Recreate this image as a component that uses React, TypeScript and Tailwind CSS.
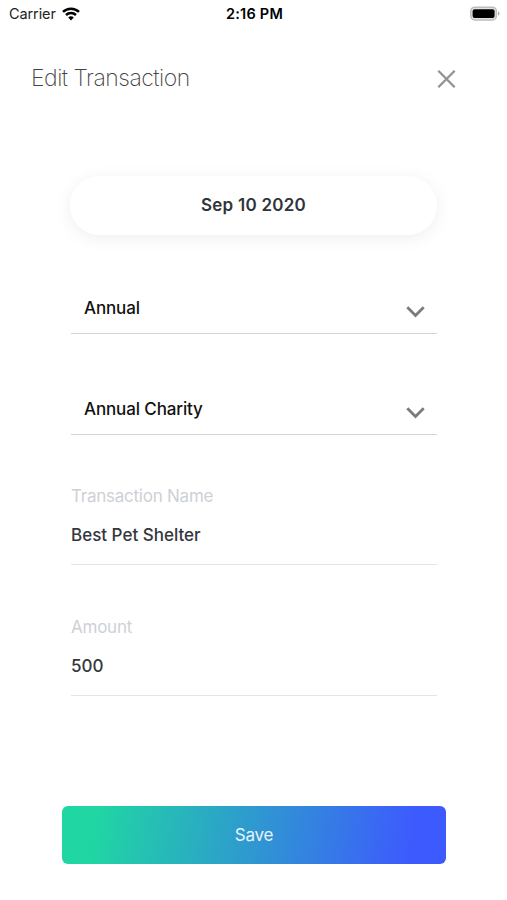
import React from 'react';

type SelectProps = {
  value: string;
};

type FieldProps = {
  label: string;
  value: string;
};

const StatusBar = () => (
  <div className="grid h-7 grid-cols-3 items-center pr-[7px] pl-[9px] text-black">
    <div className="flex items-center gap-[6px]">
      <span className="text-[14.5px] leading-5 tracking-[-0.1px] text-[#222]">Carrier</span>
      <svg width="18" height="14" viewBox="0 0 18 14" fill="none" stroke="#000" strokeWidth="2.5">
        <path d="M1 4.9C5.4.6 12.6.6 17 4.9" />
        <path d="M4 8c2.8-2.6 7.2-2.6 10 0" />
        <path d="M6.2 10.4c1.6-1.4 4-1.4 5.6 0L9 13.4z" fill="#000" stroke="none" />
      </svg>
    </div>
    <span className="text-center text-[14.5px] leading-5 font-semibold tracking-[0.25px] whitespace-nowrap">
      2:16 PM
    </span>
    <svg className="justify-self-end" width="31" height="16" viewBox="0 0 31 16">
      <rect x="1.8" y="1.2" width="25.6" height="12.8" rx="4" fill="#e4e4e4" stroke="#bdbdbd" strokeWidth="1.5" />
      <rect x="3.6" y="3.2" width="22" height="8.8" rx="2" fill="#000" />
      <path d="M29 5.5c2 .6 2 3.6 0 4.2z" fill="#aaa" />
    </svg>
  </div>
);

const Select = ({ value }: SelectProps) => (
  <button className="flex h-[52px] w-full items-center justify-between border-b-[1.5px] border-[#d2d4d7] pr-3 pl-[13px]">
    <span className="text-[17px] leading-6 font-medium tracking-[-0.13px] text-[#111]">{value}</span>
    <svg className="mt-[8px]" width="19" height="12" viewBox="0 0 19 12" fill="none">
      <path d="M1.3 1.3 9.5 9.5l8.2-8.2" stroke="#7b7b7b" strokeWidth="2.8" />
    </svg>
  </button>
);

const Field = ({ label, value }: FieldProps) => (
  <div className="border-b border-[#e4e5e7] pb-[17px]">
    <p className="text-[17px] leading-6 tracking-[-0.24px] text-[#cdd1d7]">{label}</p>
    <p className="mt-[15px] text-[17px] leading-6 font-medium text-[#34373d]">{value}</p>
  </div>
);

const App = () => {
  return (
    <main className="h-[900px] w-[507px] overflow-hidden bg-white font-['Inter','Liberation_Sans',sans-serif]">
      <StatusBar />

      <header className="mt-[34px] flex h-8 items-center justify-between pr-[51px] pl-[31px]">
        <h1 className="text-[23px] leading-8 font-extralight tracking-[-0.5px] text-[#444]">
          Edit Transaction
        </h1>
        <button aria-label="Close">
          <svg width="19" height="19" viewBox="0 0 19 19" fill="none">
            <path d="m1.3 1.8 16.4 16.4m0-16.4L1.3 18.2" stroke="#929292" strokeWidth="2.3" />
          </svg>
        </button>
      </header>

      <section className="mt-[82px] pr-[70px] pl-[70px]">
        <button className="flex h-[59px] w-full items-center justify-center rounded-full bg-white text-[17px] font-semibold tracking-[0.25px] text-[#30343b] shadow-[0_3px_18px_rgba(0,0,0,0.065)]">
          Sep 10 2020
        </button>

        <div className="mt-[47px] flex flex-col gap-[49px] pl-px">
          <Select value="Annual" />
          <Select value="Annual Charity" />
        </div>

        <div className="mt-[49px] flex flex-col gap-[50px] pl-px">
          <Field label="Transaction Name" value="Best Pet Shelter" />
          <Field label="Amount" value="500" />
        </div>
      </section>

      <div className="mt-[110px] pr-[61px] pl-[62px]">
        <button className="flex h-[58px] w-full items-center justify-center rounded-md bg-[linear-gradient(98deg,#20d6a3_9%,#3d5afe_91%)] pt-0.5 text-[17px] tracking-[-0.2px] text-[#e9f3fc]">
          Save
        </button>
      </div>
    </main>
  );
};

export default App;
